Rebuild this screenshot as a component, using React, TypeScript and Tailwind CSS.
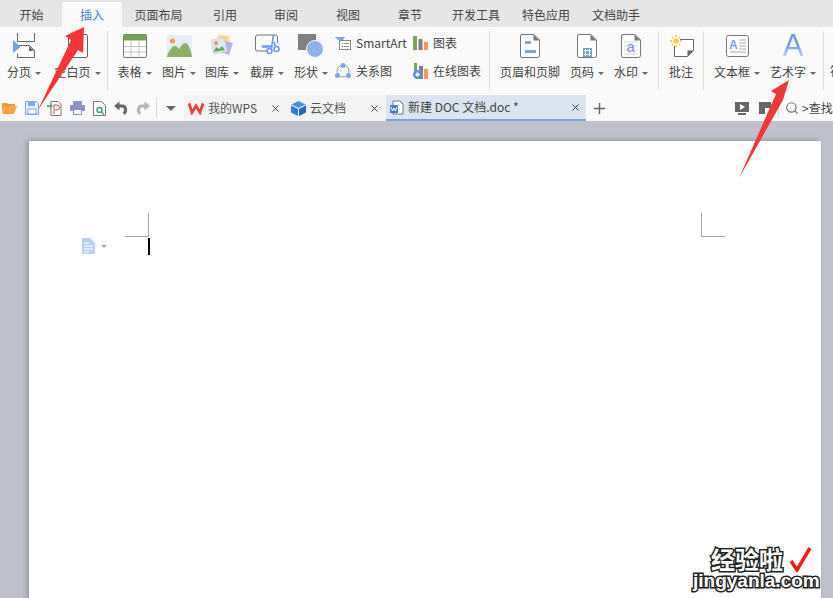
import type { ReactNode } from "react";
import { X, Plus, Search } from "lucide-react";

const menuTabs = [
  { label: "开始", w: "w-[61px]" },
  { label: "插入", w: "w-[60px]", active: true },
  { label: "页面布局", w: "w-[73px]" },
  { label: "引用", w: "w-[60px]" },
  { label: "审阅", w: "w-[62px]" },
  { label: "视图", w: "w-[62px]" },
  { label: "章节", w: "w-[62px]" },
  { label: "开发工具", w: "w-[70px]" },
  { label: "特色应用", w: "w-[70px]" },
  { label: "文档助手", w: "w-[70px]" },
];

function Caret() {
  return <span className="ml-[4px] inline-block h-0 w-0 border-x-[3px] border-t-[3px] border-x-transparent border-t-[#666] align-middle" />;
}

function Sep() {
  return <div className="mt-[1px] h-[59px] w-px shrink-0 bg-[#dcdcdc]" />;
}

function Tool({ w, icon, label, caret = true }: { w: string; icon: ReactNode; label: string; caret?: boolean }) {
  return (
    <div className={`${w} flex shrink-0 flex-col items-center`}>
      <div className="flex h-[31px] items-center justify-center">{icon}</div>
      <div className="mt-[1px] whitespace-nowrap text-[12px] leading-[20px] text-[#444]">
        {label}
        {caret && <Caret />}
      </div>
    </div>
  );
}

function SmallTool({ icon, label }: { icon: ReactNode; label: string }) {
  return (
    <div className="flex h-[20px] items-center gap-[5px] whitespace-nowrap text-[12px] text-[#444]">
      {icon}
      <span>{label}</span>
    </div>
  );
}

function Page({ children }: { children?: ReactNode }) {
  return (
    <svg width="20" height="24" viewBox="0 0 20 24">
      <path d="M2 .5h12l5.500 5.500v15.500a2 2 0 0 1-2 2H2a1.500 1.500 0 0 1-1.500-1.500V2A1.500 1.500 0 0 1 2 .5z" fill="#fff" stroke="#777" />
      <path d="M13.500 .5l6 6h-6z" fill="#777" />
      {children}
    </svg>
  );
}

export default function App() {
  return (
    <div className="relative h-[598px] w-[833px] overflow-hidden bg-[#bfc2cc] font-['Noto_Sans_CJK_SC',sans-serif]">
      {/* Menu tabs */}
      <div className="flex h-[27px] items-end bg-[#e6e6e6] pl-px">
        {menuTabs.map((t) => (
          <div
            key={t.label}
            className={`${t.w} flex h-[25px] items-center justify-center text-[12px] ${t.active ? "rounded-t-[2px] bg-[#fafafa] text-[#3f7fc4]" : "text-[#444]"}`}
          >
            {t.label}
          </div>
        ))}
      </div>

      {/* Ribbon */}
      <div className="flex h-[68px] items-start overflow-hidden bg-[#fafafa] pt-[3px]">
        <Tool
          w="w-[48px]"
          label="分页"
          icon={
            <svg width="24" height="26" viewBox="0 0 24 26">
              <path d="M5.500 0v8.500h17V0M5.500 12.500h12l5 5v7h-17v-4" fill="none" stroke="#666" />
              <path d="M17 13v5h5z" fill="#666" />
              <path d="M1 7l7.500 7L1 20z" fill="#6fa0e8" />
            </svg>
          }
        />
        <Tool
          w="w-[59px]"
          label="空白页"
          icon={
            <svg width="20" height="24" viewBox="0 0 20 24">
              <rect x=".5" y=".5" width="19" height="23" rx="1.500" fill="#fff" stroke="#666" />
            </svg>
          }
        />
        <Sep />
        <Tool
          w="w-[53px]"
          label="表格"
          icon={
            <svg width="24" height="24" viewBox="0 0 24 24">
              <rect x=".5" y=".5" width="23" height="23" rx="1.500" fill="#fff" stroke="#777" />
              <path d="M1.500 .5h21a1 1 0 0 1 1 1v5H.5v-5a1 1 0 0 1 1-1z" fill="#75a356" />
              <path d="M8 7v16M16 7v16M1 12.500h22M1 18h22" stroke="#c2c2c2" />
            </svg>
          }
        />
        <Tool
          w="w-[36px]"
          label="图片"
          icon={
            <svg width="25" height="22" viewBox="0 0 25 22">
              <rect width="25" height="22" fill="#e6edf4" />
              <circle cx="5.500" cy="6" r="2.600" fill="#f59b4f" />
              <path d="M0 21C2 16 5 11 8 11c2 0 3 2 4.500 3 1.500-3 3.500-6 6-6 3 0 5 7 6.500 13v1H0z" fill="#8cb063" />
            </svg>
          }
        />
        <Tool
          w="w-[50px]"
          label="图库"
          icon={
            <svg width="24" height="24" viewBox="0 0 24 24">
              <path d="M8 1l11 1-1 15-9-1z" fill="#f6d88f" />
              <path d="M15 7l8 2-4 12-8-3z" fill="#b3b3e6" />
              <path d="M1 6l13-2 3 13-13 3z" fill="#dfeaf6" stroke="#d5d5d5" />
              <circle cx="6" cy="9" r="2" fill="#f28f4d" />
              <path d="M3.500 18l2.500-5 3 2 3-3 3 4z" fill="#64a65a" />
            </svg>
          }
        />
        <Tool
          w="w-[40px]"
          label="截屏"
          icon={
            <svg width="25" height="24" viewBox="0 0 25 24">
              <path d="M22.500 9V3a2 2 0 0 0-2-2H2.500a2 2 0 0 0-2 2v12a2 2 0 0 0 2 2H13" fill="none" stroke="#777" />
              <path d="M7 12.500h9" stroke="#6c9cea" strokeWidth="2.500" />
              <path d="M18.500 1l-2 13M19 8l2 6" stroke="#6c9cea" strokeWidth="1.700" />
              <circle cx="14.500" cy="17" r="2.500" fill="#fff" stroke="#6c9cea" strokeWidth="1.600" />
              <circle cx="21.500" cy="15" r="2.500" fill="#fff" stroke="#6c9cea" strokeWidth="1.600" />
            </svg>
          }
        />
        <Tool
          w="w-[48px]"
          label="形状"
          icon={
            <svg width="26" height="24" viewBox="0 0 26 24">
              <rect width="18" height="16" fill="#808080" />
              <circle cx="17" cy="15" r="8.500" fill="#8fb1ea" stroke="#fafafa" strokeWidth="1" />
            </svg>
          }
        />
        <div className="flex w-[78px] shrink-0 flex-col gap-[8px] pt-[3px]">
          <SmallTool
            label="SmartArt"
            icon={
              <svg width="16" height="14" viewBox="0 0 16 14">
                <path d="M0 1h10l-2 3H3z" fill="#7ba6e6" />
                <rect x="4.500" y="4.500" width="11" height="9" fill="#fff" stroke="#888" />
                <path d="M7 7.500h1M9 7.500h5M7 10.500h1M9 10.500h5" stroke="#888" />
              </svg>
            }
          />
          <SmallTool
            label="关系图"
            icon={
              <svg width="16" height="16" viewBox="0 0 16 16">
                <circle cx="8" cy="8" r="6" fill="none" stroke="#9a9a9a" />
                <circle cx="8" cy="2.500" r="2.500" fill="#7ba6e6" />
                <circle cx="2.500" cy="12.500" r="2.500" fill="#7ba6e6" />
                <circle cx="13.500" cy="12.500" r="2.500" fill="#7ba6e6" />
              </svg>
            }
          />
        </div>
        <div className="flex w-[76px] shrink-0 flex-col gap-[8px] pt-[3px]">
          <SmallTool
            label="图表"
            icon={
              <svg width="15" height="14" viewBox="0 0 15 14">
                <rect width="4" height="14" fill="#7aa35a" />
                <rect x="5.500" y="3" width="4" height="11" fill="#808080" />
                <rect x="11" y="6" width="4" height="8" fill="#ef9b5c" />
              </svg>
            }
          />
          <SmallTool
            label="在线图表"
            icon={
              <svg width="15" height="16" viewBox="0 0 15 16">
                <rect x="1" width="3" height="8" fill="#7aa35a" />
                <rect x="6" y="3" width="4" height="13" fill="#808080" />
                <rect x="11" y="6" width="4" height="10" fill="#ef9b5c" />
                <circle cx="4.500" cy="11.500" r="4.500" fill="#5d8fd6" />
                <circle cx="4.500" cy="11.500" r="2" fill="#fff" />
              </svg>
            }
          />
        </div>
        <Sep />
        <Tool
          w="w-[80px]"
          label="页眉和页脚"
          caret={false}
          icon={
            <Page>
              <rect x="5" y="7" width="6" height="3" fill="#7ba6e6" />
              <rect x="5" y="16" width="11" height="3" fill="#7ba6e6" />
            </Page>
          }
        />
        <Tool
          w="w-[34px]"
          label="页码"
          icon={
            <Page>
              <rect x="6" y="14" width="9" height="9" fill="#6f9ee6" />
              <path d="M8.500 15v7M12.500 15v7M7 16.500h7M7 20.500h7" stroke="#fff" />
            </Page>
          }
        />
        <Tool
          w="w-[54px]"
          label="水印"
          icon={
            <Page>
              <path d="M3 8h14M3 12h14M3 16h14M3 20h14" stroke="#cfd6e6" />
              <text x="5.500" y="18" fontSize="15" fill="#7f8fd0" fontFamily="Liberation Sans">a</text>
            </Page>
          }
        />
        <Sep />
        <Tool
          w="w-[44px]"
          label="批注"
          caret={false}
          icon={
            <svg width="25" height="22" viewBox="0 0 25 22">
              <path d="M11 4.500h13.500v11l-6 6H5.500V11" fill="#fff" stroke="#666" />
              <path d="M24.500 15.500l-6 6v-6z" fill="#666" />
              <circle cx="7" cy="6" r="2.800" fill="#f8ce4c" />
              <path d="M7 0v2M7 10v2M1 6h2M11 6h2M3 2l1 1M10 9l1 1M3 10l1-1M10 3l1-1" stroke="#f8b92c" strokeWidth="1.500" />
            </svg>
          }
        />
        <Sep />
        <Tool
          w="w-[66px]"
          label="文本框"
          icon={
            <svg width="23" height="22" viewBox="0 0 23 22">
              <rect x=".5" y=".5" width="22" height="21" rx="2" fill="#fff" stroke="#777" />
              <text x="3" y="14" fontSize="12" fontWeight="700" fill="#6f9ee6" fontFamily="Liberation Sans">A</text>
              <path d="M13 5h7M13 8h7M13 11h7M13 14h7M4 17h16" stroke="#aaa" />
            </svg>
          }
        />
        <Tool
          w="w-[46px]"
          label="艺术字"
          icon={
            <span className="bg-gradient-to-b from-[#6a9ae6] from-50% to-[#dfe9f9] bg-clip-text font-['Liberation_Sans',sans-serif] text-[31px] leading-[31px] text-transparent">
              A
            </span>
          }
        />
        <div className="ml-[7px]">
          <Sep />
        </div>
        <div className="ml-[6px] mt-[31px] whitespace-nowrap text-[12px] leading-[20px] text-[#444]">符号</div>
      </div>

      {/* Quick access + document tabs */}
      <div className="flex h-[26px] items-stretch bg-[#fafafa]">
        <div className="flex w-[156px] shrink-0 items-center gap-[8px] pl-[2px]">
          <svg width="15" height="12" viewBox="0 0 15 12">
            <path d="M0 1h5l1 1h7v2H3L0 10z" fill="#e8992f" />
            <path d="M3 4h12l-3 8H0z" fill="#f9a347" />
          </svg>
          <svg width="14" height="14" viewBox="0 0 14 14">
            <path d="M.500 .500h11l2 2v11H.500z" fill="#e8f0fb" stroke="#7da7e8" />
            <rect x="3" y="1" width="7" height="4" fill="#7da7e8" />
            <rect x="3" y="8" width="8" height="5" fill="#fff" stroke="#7da7e8" />
          </svg>
          <svg width="15" height="15" viewBox="0 0 15 15">
            <path d="M4 .500h7l3 3v11H4z" fill="#fff" stroke="#777" />
            <path d="M0 4h3V2l3 3-3 3V6H0z" fill="#5cae6a" />
            <path d="M7 13V4h3a2.500 2.500 0 0 1 0 5H8" fill="none" stroke="#d24a4a" />
          </svg>
          <svg width="15" height="14" viewBox="0 0 15 14">
            <rect x="3" width="9" height="4" fill="#8f95c9" />
            <rect y="4" width="15" height="6" rx="1" fill="#8a90c6" />
            <rect x="3.500" y="8.500" width="8" height="5" fill="#fff" stroke="#8a90c6" />
          </svg>
          <svg width="13" height="15" viewBox="0 0 13 15">
            <path d="M.500 .500h8l4 4v10H.500z" fill="#fff" stroke="#777" />
            <circle cx="6.500" cy="9" r="2.500" fill="none" stroke="#4aa36a" strokeWidth="1.500" />
            <path d="M8.500 11l2.500 2.500" stroke="#4aa36a" strokeWidth="1.500" />
          </svg>
          <svg width="14" height="14" viewBox="0 0 14 14">
            <path d="M0 5l5.500-4.500v9z" fill="#666" />
            <path d="M5 5h3.500a4 4 0 0 1 1 7.500" fill="none" stroke="#666" strokeWidth="3" />
          </svg>
          <svg width="14" height="14" viewBox="0 0 14 14">
            <path d="M14 5L8.500 .500v9z" fill="#b4b4b4" />
            <path d="M9 5H5.500a4 4 0 0 0-1 7.500" fill="none" stroke="#b4b4b4" strokeWidth="3" />
          </svg>
        </div>
        <div className="mb-[3px] mt-[2px] w-px bg-[#d8d8d8]" />
        <div className="flex w-[27px] shrink-0 items-center justify-center">
          <span className="h-0 w-0 border-x-[5px] border-t-[5px] border-x-transparent border-t-[#666]" />
        </div>
        <div className="flex w-[101px] shrink-0 items-center bg-[#f3f3f3] pl-[4px] text-[12px] text-[#555]">
          <svg width="16" height="13" viewBox="0 0 16 13">
            <path d="M1 1.500l3 9L8 4l4 6.500 3-9" fill="none" stroke="#e2433f" strokeWidth="2.800" />
          </svg>
          <span className="ml-[4px]">我的WPS</span>
          <X className="ml-auto mr-[4px] text-[#333]" size={11} />
        </div>
        <div className="flex w-[101px] shrink-0 items-center bg-[#f3f3f3] pl-[6px] text-[12px] text-[#555]">
          <svg width="15" height="15" viewBox="0 0 15 15">
            <path d="M7.500 0l7 3.500-7 3.500-7-3.500z" fill="#4a90e2" />
            <path d="M0 4.500l7 3.500v7l-7-3.500z" fill="#2f7bd6" />
            <path d="M15 4.500l-7 3.500v7l7-3.500z" fill="#1f66c0" />
          </svg>
          <span className="ml-[4px]">云文档</span>
          <X className="ml-auto mr-[6px] text-[#333]" size={11} />
        </div>
        <div className="flex w-[200px] shrink-0 items-center border-b-2 border-[#7aa3d8] bg-[#dbe5f1] pl-[4px] text-[12px] text-[#444]">
          <svg width="14" height="15" viewBox="0 0 14 15">
            <path d="M3 1h7l3 3v10H3z" fill="#fff" stroke="#777" />
            <rect y="5" width="8" height="8" fill="#4a7fc6" />
            <path d="M1 7l1.500 4L4 8l1.500 3L7 7" fill="none" stroke="#fff" />
          </svg>
          <span className="ml-[4px] whitespace-pre">新建 DOC 文档.doc *</span>
          <X className="ml-auto mr-[5px] text-[#222]" size={11} />
        </div>
        <div className="flex w-[26px] shrink-0 items-center justify-center">
          <Plus size={17} className="text-[#666]" strokeWidth={2} />
        </div>
        <div className="ml-auto flex items-center text-[12px] text-[#444]">
          <svg width="14" height="13" viewBox="0 0 14 13">
            <rect width="14" height="10" fill="#666" />
            <path d="M5 2l5 3-5 3z" fill="#fff" />
            <rect x="3" y="11" width="8" height="2" fill="#666" />
          </svg>
          <svg className="ml-[10px]" width="12" height="12" viewBox="0 0 12 12">
            <path d="M0 0h12v6H6v6H0z" fill="#666" />
          </svg>
          <div className="ml-[7px] h-[20px] w-px bg-[#d8d8d8]" />
          <div className="ml-[6px] flex w-[48px] items-center gap-[3px] overflow-hidden whitespace-nowrap">
            <Search size={14} className="shrink-0 text-[#777]" />
            <span>&gt;查找</span>
          </div>
        </div>
      </div>

      {/* Document page */}
      <div className="pl-[29px] pr-[12px] pt-[20px]">
        <div className="relative h-[480px] bg-white px-[96px] pt-[72px] shadow-[-2px_-1px_5px_rgba(90,95,110,0.45)]">
          <div className="flex justify-between">
            <div className="h-[24px] w-[24px] border-b border-r border-[#a8a8a8]" />
            <div className="h-[24px] w-[24px] border-b border-l border-[#a8a8a8]" />
          </div>
          <div className="ml-[23px] mt-[1px] h-[17px] w-[2px] bg-black" />
          <div className="absolute left-[53px] top-[97px] flex items-center gap-[6px]">
            <svg width="13" height="16" viewBox="0 0 13 16">
              <path d="M0 0h8l5 5v11H0z" fill="#b9cfee" />
              <path d="M2 5h5M2 8h9M2 11h9M2 14h5" stroke="#fff" />
            </svg>
            <span className="h-0 w-0 border-x-[3px] border-t-[3px] border-x-transparent border-t-[#a8a8a8]" />
          </div>
        </div>
      </div>

      {/* Annotation arrows */}
      <svg className="absolute left-0 top-0" width="833" height="200" viewBox="0 0 833 200">
        <path d="M84 27L65 36L71 40L38 110L78 50L83 53Z" fill="#f5353a" />
        <path d="M789 80L771 91L776 94L739 178L783 100Z" fill="#f5353a" />
      </svg>

      {/* Watermark */}
      <div className="absolute left-[693px] top-[546px] flex w-[125px] flex-col text-white">
        <div className="flex items-center gap-[6px] pl-[18px]">
          <span className="text-[24px] font-bold leading-[26px] [-webkit-text-stroke:3px_#222] [paint-order:stroke_fill]">经验啦</span>
          <svg width="23" height="26" viewBox="0 0 23 26">
            <path d="M2 15l6 9L21 2" fill="none" stroke="#ee1c1c" strokeWidth="3.500" />
          </svg>
        </div>
        <span className="whitespace-nowrap font-['Liberation_Sans',sans-serif] text-[19px] font-bold leading-[18px] [-webkit-text-stroke:3px_#222] [paint-order:stroke_fill]">jingyanla.com</span>
      </div>
    </div>
  );
}
